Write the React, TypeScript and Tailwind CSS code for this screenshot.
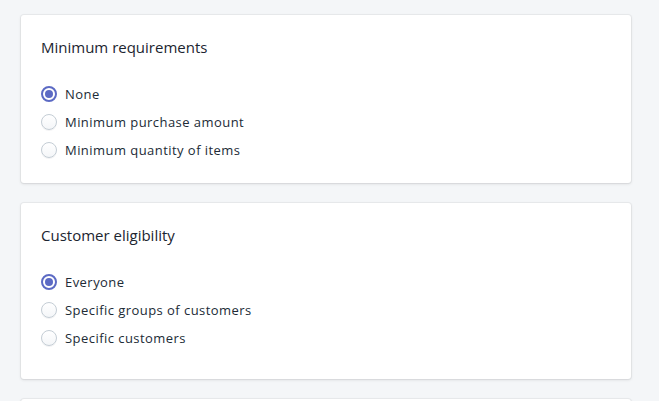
import React from 'react'

type Option = { label: string; checked?: boolean }

function Radio({ checked }: { checked?: boolean }) {
    if (checked) {
        return (
            <span className="flex h-4 w-4 shrink-0 items-center justify-center rounded-full border-2 border-[#5c6ac4] bg-white">
                <span className="h-[8px] w-[8px] rounded-full bg-[#5c6ac4]"></span>
            </span>
        )
    }
    return (
        <span className="h-4 w-4 shrink-0 rounded-full border border-[#c4cdd5] bg-gradient-to-b from-white to-[#f4f6f8] shadow-[0_1px_0_rgba(22,29,37,0.05)]"></span>
    )
}

function Card({ title, options, bottom }: { title: string; options: Option[]; bottom: string }) {
    return (
        <div className={`w-[610px] rounded-[3px] bg-white px-5 pt-5 shadow-[0_0_0_1px_rgba(63,63,68,0.05),0_1px_3px_0_rgba(63,63,68,0.15)] ${bottom}`}>
            <h2 className="text-[15px] leading-6 font-medium text-[#1c2530]">{title}</h2>
            <div className="mt-[21px] flex flex-col">
                {options.map((o) => (
                    <label key={o.label} className="flex h-7 items-center gap-2">
                        <Radio checked={o.checked} />
                        <span className="text-[13px] leading-5 tracking-[0.45px] text-[#212b36]">{o.label}</span>
                    </label>
                ))}
            </div>
        </div>
    )
}

export default function App() {
    return (
        <div className="h-screen overflow-hidden bg-[#f4f6f8] pt-[15px] pl-[21px] font-['Open_Sans',sans-serif]">
            <div className="flex flex-col gap-5">
                <Card
                    title="Minimum requirements"
                    bottom="pb-[19px]"
                    options={[
                        { label: 'None', checked: true },
                        { label: 'Minimum purchase amount' },
                        { label: 'Minimum quantity of items' },
                    ]}
                />
                <Card
                    title="Customer eligibility"
                    bottom="pb-[27px]"
                    options={[
                        { label: 'Everyone', checked: true },
                        { label: 'Specific groups of customers' },
                        { label: 'Specific customers' },
                    ]}
                />
                <div className="h-20 w-[610px] rounded-[3px] bg-white shadow-[0_0_0_1px_rgba(63,63,68,0.05),0_1px_3px_0_rgba(63,63,68,0.15)]"></div>
            </div>
        </div>
    )
}
